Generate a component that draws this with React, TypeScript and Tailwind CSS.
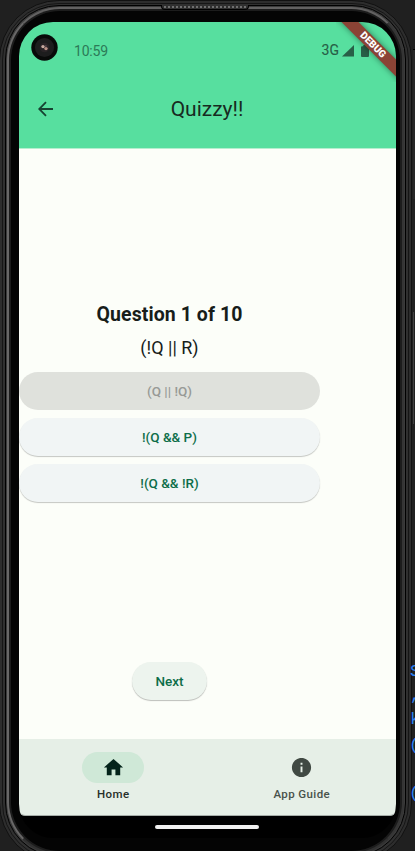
import React from 'react';

function Camera() {
  return (
    <svg width="27" height="27" viewBox="0 0 27 27" className="-mt-px shrink-0">
      <circle cx="13.5" cy="13.5" r="13.2" fill="#080a09" />
      <circle cx="13.5" cy="13.5" r="9.6" fill="#1d1d1e" />
      <circle cx="13.5" cy="13.5" r="4.8" fill="#292326" />
      <circle cx="12" cy="12.6" r="1.7" fill="#c7aaa0" />
      <circle cx="15" cy="14.6" r="1.7" fill="#b98f84" />
      <circle cx="14.8" cy="12" r="1" fill="#514047" />
    </svg>
  );
}

function DebugBanner() {
  return (
    <div className="absolute right-0 top-0 h-[60px] w-[60px] overflow-hidden">
      <div className="absolute left-[-11px] top-[17px] flex h-[12px] w-[96px] rotate-45 items-center justify-center bg-[#8b4335] text-[10px] font-black leading-none text-white shadow-[0_0_6px_rgba(0,0,0,0.45)]">
        DEBUG
      </div>
    </div>
  );
}

function StatusBar() {
  return (
    <div className="flex h-[52px] items-center pl-[12px] pr-[27px] text-[14px] text-[#2c7a57]">
      <Camera />
      <span className="ml-[16px] mt-[6px] tracking-[-0.2px]">10:59</span>
      <span className="ml-auto mt-[5px] text-[#285f47] [-webkit-text-stroke:0.15px_#285f47]">3G</span>
      <svg width="12" height="12" viewBox="0 0 12 12" className="ml-[3px] mr-px mt-[5px]">
        <path d="M12 0v11.5H0z" fill="#285f47" />
      </svg>
      <svg width="8" height="12" viewBox="0 0 8 12" className="ml-[6px] mt-[5px]">
        <path d="M2.3 0h3.4v1.2H7q1 0 1 1V11q0 1-1 1H1q-1 0-1-1V2.200q0-1 1-1h1.300z" fill="#285f47" />
      </svg>
    </div>
  );
}

function Answer({ label, disabled }: { label: string; disabled?: boolean }) {
  return (
    <button
      className={
        'flex h-[38px] w-[301px] items-center justify-center rounded-full pt-px text-[13.5px] font-medium ' +
        (disabled
          ? 'bg-[#dfe1dc] text-[#979a96]'
          : 'bg-[#f1f5f5] text-[#0e6e49] shadow-[0_1px_1px_rgba(0,0,0,0.22)]')
      }
    >
      {label}
    </button>
  );
}

function Screen() {
  return (
    <div className="relative flex h-[816px] w-[377px] flex-col overflow-hidden rounded-[34px] bg-black">
      <header className="h-[127px] shrink-0 border-b border-[#b5efcf] bg-[#57df9f]">
        <StatusBar />
        <div className="grid h-[69px] grid-cols-[1fr_auto_1fr] items-center pr-px">
          <svg width="16" height="16" viewBox="0 0 16 16" className="ml-[19px]" fill="none" stroke="#174332" strokeWidth="1.8">
            <path d="M15 8H1.500M8 1.200L1.200 8L8 14.800" />
          </svg>
          <h1 className="pt-[2px] text-[21px] leading-none text-[#172a21]">Quizzy!!</h1>
        </div>
      </header>
      <main className="flex h-[590px] shrink-0 flex-col items-start bg-[#fcfef9]">
        <div className="flex w-[301px] flex-col items-center pt-[154px]">
          <h2 className="text-[19.5px] font-bold leading-[24px] tracking-[0.08px] text-[#171d1a]">Question 1 of 10</h2>
          <p className="mt-[10px] text-[18px] leading-[22px] text-[#171d1a]">(!Q || R)</p>
          <div className="mt-[13px] flex flex-col gap-[8px]">
            <Answer label="(Q || !Q)" disabled />
            <Answer label="!(Q && P)" />
            <Answer label="!(Q && !R)" />
          </div>
          <button className="mt-[160px] h-[38px] w-[75px] rounded-full bg-[#edf4ee] pt-px text-[13.5px] font-medium text-[#0e6e49] shadow-[0_1px_1px_rgba(0,0,0,0.25)]">
            Next
          </button>
        </div>
      </main>
      <nav className="grid h-[77px] shrink-0 grid-cols-2 rounded-b-[6px] border-b border-[#a6ada8] bg-[#e6efe7] pt-[13px] text-[11.5px] font-medium tracking-[0.4px]">
        <div className="flex flex-col items-center text-[#262e29]">
          <div className="flex h-[31px] w-[62px] items-center justify-center rounded-full bg-[#cfe8d7]">
            <svg width="23" height="23" viewBox="0 0 24 24" fill="#03231a">
              <path d="M10 20v-6h4v6h5v-8h3L12 3 2 12h3v8z" />
            </svg>
          </div>
          <span className="mt-[3px] leading-[16px]">Home</span>
        </div>
        <div className="flex flex-col items-center text-[#48524b]">
          <div className="flex h-[31px] items-center">
            <svg width="23" height="23" viewBox="0 0 24 24" fill="#404943">
              <path d="M12 2C6.480 2 2 6.480 2 12s4.480 10 10 10 10-4.480 10-10S17.520 2 12 2zm1 15h-2v-6h2v6zm0-8h-2V7h2v2z" />
            </svg>
          </div>
          <span className="mt-[3px] leading-[16px]">App Guide</span>
        </div>
      </nav>
      <div className="flex h-[22px] justify-center pr-[2px] pt-[9px]">
        <div className="h-[4px] w-[104px] rounded-full bg-[#f1f1f1]" />
      </div>
      <DebugBanner />
    </div>
  );
}

export default function App() {
  return (
    <div
      className="relative h-[851px] w-[415px] overflow-hidden bg-[#202020]"
      style={{ fontFamily: 'Roboto, "Liberation Sans", sans-serif' }}
    >
      <div className="absolute left-[410px] top-[660px] flex w-[20px] flex-col text-[17px] leading-[24px] text-[#2b80f5]" style={{ fontFamily: '"Liberation Mono", monospace' }}>
        <span>S</span>
        <span>,</span>
        <span>k</span>
        <span className="-ml-px mt-[2px]">(</span>
        <span className="-ml-px mt-[24px]">(</span>
      </div>
      <div className="-ml-px h-[863px] w-[413px] rounded-[60px] border border-[#111111] bg-[#2d2d2d] p-[2px]">
        <div className="h-full rounded-[57px] border border-[#161616] bg-[#303030] p-[2px] pt-px">
          <div className="h-full rounded-[54px] border border-black bg-[#3a3a3a] p-px">
            <div className="h-full rounded-[53px] border-2 border-b-[#303030] border-l-[#686767] border-r-[#353535] border-t-[#626161] bg-[#1c1c1c] p-[2px]">
              <div className="h-full rounded-[49px] bg-[#040404] pl-[8px] pt-[11px]">
                <Screen />
              </div>
            </div>
          </div>
        </div>
      </div>
      <div className="absolute left-[161px] top-[5px] h-[5px] w-[88px] rounded-b-[4px] border border-t-0 border-black bg-[#303030]">
        <div className="mx-[2px] mt-px border-t-2 border-dotted border-[#707070]" />
      </div>
      <div className="absolute left-[413px] top-[49px] h-[150px] w-[2px] border-t border-black bg-[#262626]" />
      <div className="absolute left-[413px] top-[312px] h-[112px] w-px bg-[#414141]" />
    </div>
  );
}
